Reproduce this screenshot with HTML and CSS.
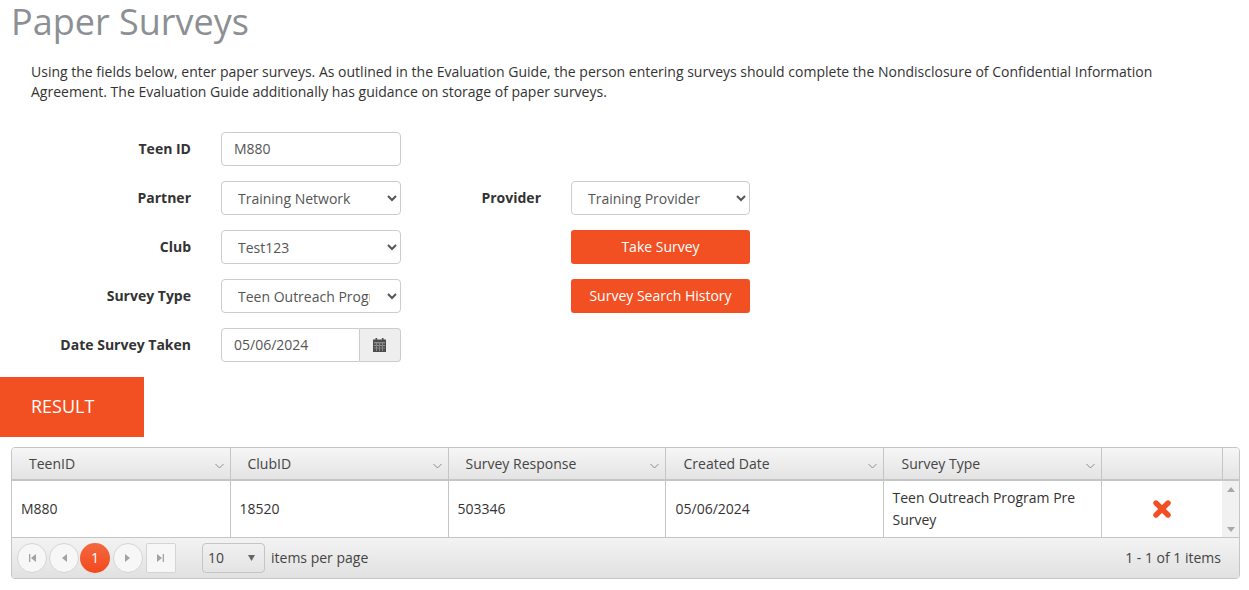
FILE: index.html
```html
<!DOCTYPE html>
<html lang="en">
<head>
<meta charset="utf-8">
<title>Paper Surveys</title>
<link rel="stylesheet" href="styles.css">
</head>
<body>
<h1 class="title">Paper Surveys</h1>
<p class="intro">Using the fields below, enter paper surveys. As outlined in the Evaluation Guide, the person entering surveys should complete the Nondisclosure of Confidential Information Agreement. The Evaluation Guide additionally has guidance on storage of paper surveys.</p>
<form class="form">
  <label class="label">Teen ID</label>
  <input class="control input" type="text" value="M880">
  <span></span><span></span>

  <label class="label">Partner</label>
  <select class="control select"><option>Training Network</option></select>
  <label class="label">Provider</label>
  <select class="control select"><option>Training Provider</option></select>

  <label class="label">Club</label>
  <select class="control select"><option>Test123</option></select>
  <span></span>
  <button class="btn" type="button">Take Survey</button>

  <label class="label">Survey Type</label>
  <select class="control select"><option>Teen Outreach Program Pre Survey</option></select>
  <span></span>
  <button class="btn" type="button">Survey Search History</button>

  <label class="label">Date Survey Taken</label>
  <div class="date">
    <input class="date-input" type="text" value="05/06/2024">
    <span class="date-btn">
      <svg width="13" height="14" viewBox="0 0 13 14"><path fill="#4d4d4d" d="M0 1.500h2.500V0h1.600v1.500h4.800V0h1.600v1.500H13V14H0z"/><path fill="#d0d0d0" d="M1 4.500h11v.7H1z"/><path fill="#b4b4b4" d="M1 7.300h11v.6H1zM1 9.700h11v.6H1zM3.200 5.200v7.800h.6V5.200zM6.200 5.200v7.800h.6V5.200zM9.200 5.200v7.800h.6V5.200z"/></svg>
    </span>
  </div>
</form>
<div class="tab">RESULT</div>
<div class="grid">
  <table class="table head">
    <colgroup><col class="c1"><col class="c2"><col class="c3"><col class="c4"><col class="c5"><col class="c6"><col></colgroup>
    <tr>
      <th>TeenID<svg class="chev" width="9" height="6" viewBox="0 0 9 6"><path d="M.5 1l4 4 4-4" fill="none" stroke="#8d8d8d"/></svg></th>
      <th>ClubID<svg class="chev" width="9" height="6" viewBox="0 0 9 6"><path d="M.5 1l4 4 4-4" fill="none" stroke="#8d8d8d"/></svg></th>
      <th>Survey Response<svg class="chev" width="9" height="6" viewBox="0 0 9 6"><path d="M.5 1l4 4 4-4" fill="none" stroke="#8d8d8d"/></svg></th>
      <th class="wide">Created Date<svg class="chev" width="9" height="6" viewBox="0 0 9 6"><path d="M.5 1l4 4 4-4" fill="none" stroke="#8d8d8d"/></svg></th>
      <th class="wide">Survey Type<svg class="chev" width="9" height="6" viewBox="0 0 9 6"><path d="M.5 1l4 4 4-4" fill="none" stroke="#8d8d8d"/></svg></th>
      <th></th>
      <th class="spacer"></th>
    </tr>
  </table>
  <div class="content">
    <table class="table body">
      <colgroup><col class="c1"><col class="c2"><col class="c3"><col class="c4"><col class="c5"><col></colgroup>
      <tr>
        <td>M880</td>
        <td>18520</td>
        <td>503346</td>
        <td class="wide">05/06/2024</td>
        <td>Teen Outreach Program Pre Survey</td>
        <td class="del"><svg width="20" height="20" viewBox="0 0 20 20"><path d="M4 4l12 12M16 4L4 16" stroke="#f25022" stroke-width="5.4" stroke-linecap="round"/></svg></td>
      </tr>
    </table>
    <div class="scroll">
      <svg width="8" height="5" viewBox="0 0 8 5"><path d="M4 0L8 5H0z" fill="#a8a8a8"/></svg>
      <svg width="8" height="5" viewBox="0 0 8 5"><path d="M0 0h8L4 5z" fill="#a8a8a8"/></svg>
    </div>
  </div>
  <div class="pager">
    <span class="pg"><svg width="8" height="8" viewBox="0 0 8 8"><path d="M1 0h1.300v8H1zM8 0v8L3 4z" fill="#a3a3a3"/></svg></span>
    <span class="pg"><svg width="6" height="8" viewBox="0 0 6 8"><path d="M6 0v8L1 4z" fill="#a3a3a3"/></svg></span>
    <span class="pg current">1</span>
    <span class="pg"><svg width="6" height="8" viewBox="0 0 6 8"><path d="M0 0v8l5-4z" fill="#a3a3a3"/></svg></span>
    <span class="pg last"><svg width="8" height="8" viewBox="0 0 8 8"><path d="M0 0v8l5-4zM5.700 0H7v8H5.700z" fill="#a3a3a3"/></svg></span>
    <span class="size">10<svg width="7" height="6" viewBox="0 0 7 6"><path d="M0 0h7L3.500 6z" fill="#666"/></svg></span>
    <span class="per">items per page</span>
    <span class="info">1 - 1 of 1 items</span>
  </div>
</div>
</body>
</html>
```
FILE: styles.css
```css
* { box-sizing: border-box; }
html, body { margin: 0; padding: 0; }
body {
  font-family: "Open Sans", sans-serif;
  font-size: 14px;
  line-height: 20px;
  color: #333;
  background: #fff;
  height: 590px;
  overflow: hidden;
}
.title {
  margin: 0;
  padding-left: 11px;
  font-size: 36px;
  font-weight: 400;
  line-height: 44px;
  color: #8c8f94;
}
.intro {
  margin: 18px 0 0;
  padding: 0 80px 0 31px;
  height: 40px;
}
.form {
  margin-top: 30px;
  display: grid;
  grid-template-columns: 191px 180px 110px 179px;
  grid-auto-rows: 34px;
  row-gap: 15px;
  column-gap: 30px;
  align-items: center;
}
.label {
  font-weight: 700;
  text-align: right;
  color: #333;
}
.control {
  width: 180px;
  height: 34px;
  border: 1px solid #ccc;
  border-radius: 4px;
  background: #fff;
  font: 14px/20px "Open Sans", sans-serif;
  color: #555;
}
.form > .select:nth-child(8) { width: 179px; }
.input { padding: 5px 12px 7px; }
.select { padding: 0 14px 0 12px; }
.btn {
  width: 179px;
  height: 34px;
  border: 0;
  border-radius: 3px;
  background: #f25022;
  color: #fff;
  font: 14px/20px "Open Sans", sans-serif;
}
.date {
  display: flex;
  width: 180px;
  height: 34px;
}
.date-input {
  width: 139px;
  border: 1px solid #ccc;
  border-radius: 4px 0 0 4px;
  padding: 6px 12px;
  font: 14px/20px "Open Sans", sans-serif;
  color: #555;
}
.date-btn {
  flex: 1;
  display: flex;
  align-items: center;
  justify-content: center;
  padding-right: 2px;
  background: #eee;
  border: 1px solid #ccc;
  border-left: 0;
  border-radius: 0 4px 4px 0;
}
.tab {
  margin-top: 15px;
  width: 144px;
  height: 60px;
  background: #f25022;
  color: #fff;
  font-size: 18px;
  line-height: 59px;
  padding-left: 31px;
}
.grid {
  margin: 10px 9px 0 11px;
  height: 132px;
  border: 1px solid #c5c5c5;
  border-radius: 4px;
  overflow: hidden;
}
.table {
  border-collapse: collapse;
  table-layout: fixed;
  width: 100%;
}
.c1 { width: 218px; }
.c2 { width: 218px; }
.c3 { width: 217px; }
.c4 { width: 218px; }
.c5 { width: 218px; }
.c6 { width: 121px; }
.head {
  height: 33px;
  border-bottom: 2px solid #c5c5c5;
  background: linear-gradient(#f6f6f6, #e3e3e3);
}
.head th {
  position: relative;
  padding: 0 0 0 17px;
  font-weight: 400;
  text-align: left;
  color: #444;
  border-right: 1px solid #c5c5c5;
}
.head th.wide { padding-left: 18px; }
.head th.spacer { border-right: 0; }
.chev { position: absolute; right: 6px; top: 15px; }
.content {
  display: flex;
  height: 57px;
  border-bottom: 1px solid #c5c5c5;
}
.body { height: 56px; flex: 1; }
.body td {
  padding: 0 9px;
  border-right: 1px solid #c5c5c5;
  line-height: 22px;
  color: #333;
}
.body td.wide { padding-left: 10px; }
.body td.del { text-align: center; border-right: 0; line-height: 0; }
.scroll {
  width: 17px;
  background: #f1f1f1;
  display: flex;
  flex-direction: column;
  justify-content: space-between;
  align-items: center;
  padding: 6px 0 5px;
}
.scroll svg { display: block; }
.pager {
  height: 40px;
  display: flex;
  align-items: center;
  padding: 0 18px 0 5px;
  background: linear-gradient(#f3f3f3, #e1e1e1);
  color: #444;
}
.pg {
  width: 30px;
  height: 30px;
  margin-right: 2px;
  border: 1px solid #d4d4d4;
  border-radius: 50%;
  background: #f7f7f7;
  display: flex;
  align-items: center;
  justify-content: center;
}
.pg.current {
  border: 0;
  background: linear-gradient(#f4683f, #f2491d);
  color: #fff;
  margin: 0 3px 0 -1px;
}
.pg.last { border-radius: 2px; margin-left: 1px; }
.size {
  width: 63px;
  height: 30px;
  margin-left: 24px;
  padding: 0 9px 0 5px;
  border: 1px solid #c5c5c5;
  border-radius: 4px;
  background: linear-gradient(#f0f0f0, #e4e4e4);
  display: flex;
  align-items: center;
  justify-content: space-between;
}
.per { margin-left: 6px; }
.info { margin-left: auto; }
```
